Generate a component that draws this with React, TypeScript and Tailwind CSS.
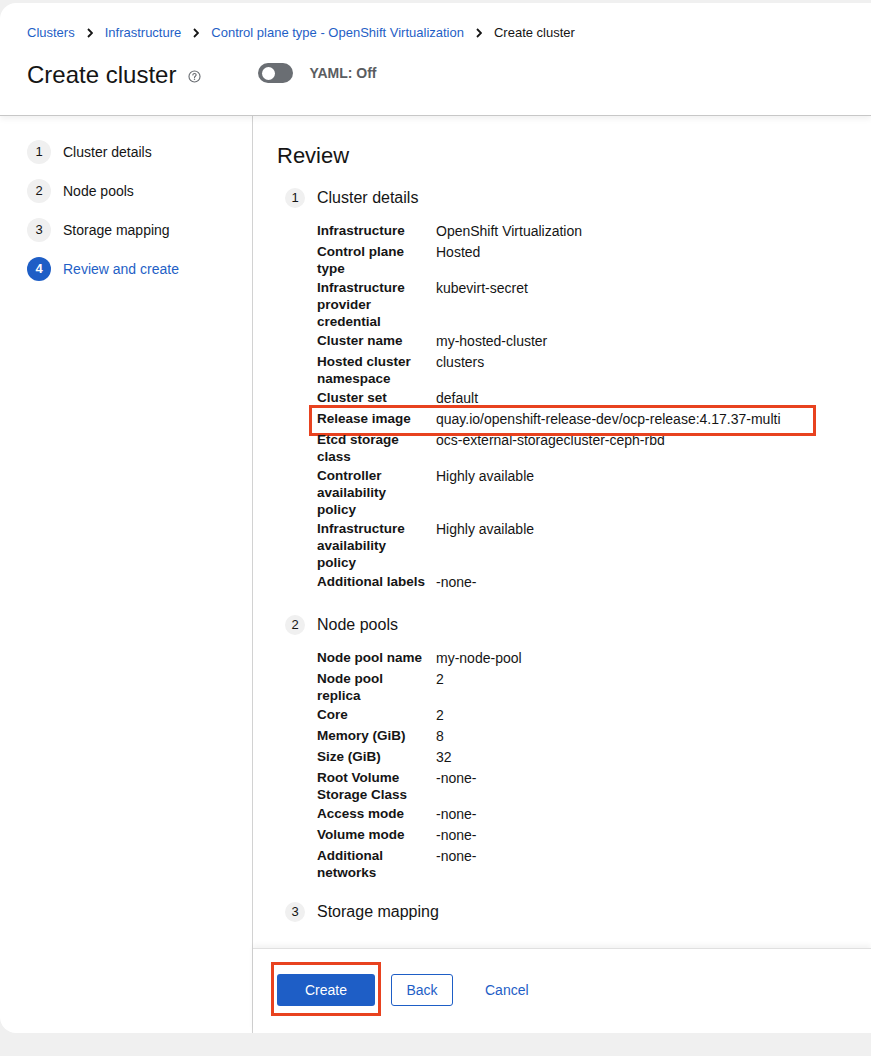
import React from "react";

const font = { fontFamily: '"Liberation Sans", Arial, sans-serif' };

const steps = [
  { n: 1, label: "Cluster details" },
  { n: 2, label: "Node pools" },
  { n: 3, label: "Storage mapping" },
  { n: 4, label: "Review and create", active: true },
];

type Row = { term: string; value: string; highlight?: boolean };

const clusterRows: Row[] = [
  { term: "Infrastructure", value: "OpenShift Virtualization" },
  { term: "Control plane\ntype", value: "Hosted" },
  { term: "Infrastructure\nprovider\ncredential", value: "kubevirt-secret" },
  { term: "Cluster name", value: "my-hosted-cluster" },
  { term: "Hosted cluster\nnamespace", value: "clusters" },
  { term: "Cluster set", value: "default" },
  { term: "Release image", value: "quay.io/openshift-release-dev/ocp-release:4.17.37-multi", highlight: true },
  { term: "Etcd storage\nclass", value: "ocs-external-storagecluster-ceph-rbd" },
  { term: "Controller\navailability\npolicy", value: "Highly available" },
  { term: "Infrastructure\navailability\npolicy", value: "Highly available" },
  { term: "Additional labels", value: "-none-" },
];

const nodePoolRows: Row[] = [
  { term: "Node pool name", value: "my-node-pool" },
  { term: "Node pool\nreplica", value: "2" },
  { term: "Core", value: "2" },
  { term: "Memory (GiB)", value: "8" },
  { term: "Size (GiB)", value: "32" },
  { term: "Root Volume\nStorage Class", value: "-none-" },
  { term: "Access mode", value: "-none-" },
  { term: "Volume mode", value: "-none-" },
  { term: "Additional\nnetworks", value: "-none-" },
];

function Chevron() {
  return (
    <svg width="6" height="10" viewBox="0 0 6 10" className="mx-3 shrink-0">
      <path d="M1 1l4 4-4 4" fill="none" stroke="#151515" strokeWidth="1.8" />
    </svg>
  );
}

function HelpIcon() {
  return (
    <svg width="13" height="13" viewBox="0 0 16 16" className="text-[#6a6e73]">
      <circle cx="8" cy="8" r="6.8" fill="none" stroke="currentColor" strokeWidth="1.4" />
      <path
        d="M6 6.2a2 2 0 0 1 4 .1c0 1.3-2 1.6-2 2.9"
        fill="none"
        stroke="currentColor"
        strokeWidth="1.4"
        strokeLinecap="round"
      />
      <circle cx="8" cy="11.4" r="0.9" fill="currentColor" />
    </svg>
  );
}

function SectionHeader({ n, title }: { n: number; title: string }) {
  return (
    <div className="flex items-center h-6">
      <span className="ml-2 flex h-5 w-5 items-center justify-center rounded-full bg-[#f0f0f0] text-[13px] text-[#151515]">
        {n}
      </span>
      <span className="ml-3 text-[16px] text-[#151515]">{title}</span>
    </div>
  );
}

function Rows({ rows }: { rows: Row[] }) {
  return (
    <dl className="ml-10 mt-3 grid grid-cols-[119px_1fr] gap-y-[2px] text-[#151515]">
      {rows.map((r) => (
        <React.Fragment key={r.term}>
          <dt className="relative whitespace-pre-line text-[13.5px] font-bold leading-[17px]">
            {r.highlight && (
              <span className="pointer-events-none absolute -left-2 -top-[5px] h-[31px] w-[507px] border-[3px] border-[#e8421f]" />
            )}
            {r.term}
          </dt>
          <dd className="text-[14px] leading-[19px]">{r.value}</dd>
        </React.Fragment>
      ))}
    </dl>
  );
}

export default function App() {
  return (
    <div className="min-h-screen bg-[#f0f0f0] pt-[3px]" style={font}>
      <div className="flex h-[1030px] flex-col overflow-hidden rounded-l-[16px] bg-white">
        <header className="relative z-10 h-[113px] shrink-0 border-b border-[#c7c7c7] px-[27px] pt-[21px] shadow-[0_3px_6px_rgba(0,0,0,0.06)]">
          <nav className="flex items-center text-[13px] leading-[18px]">
            <span className="text-[#1f5fc6]">Clusters</span>
            <Chevron />
            <span className="text-[#1f5fc6]">Infrastructure</span>
            <Chevron />
            <span className="text-[#1f5fc6]">Control plane type - OpenShift Virtualization</span>
            <Chevron />
            <span className="text-[#151515]">Create cluster</span>
          </nav>
          <div className="mt-[15px] flex items-center">
            <h1 className="text-[24px] leading-[36px] text-[#151515]">Create cluster</h1>
            <span className="ml-[12px] mt-[3px] flex">
              <HelpIcon />
            </span>
            <span className="mb-[4px] ml-[57px] flex h-[20px] w-[35px] items-center rounded-full bg-[#6a6e73] px-[4px]">
              <span className="h-[13px] w-[13px] rounded-full bg-white" />
            </span>
            <span className="mb-[3px] ml-4 text-[14px] font-bold text-[#5a5d61]">YAML: Off</span>
          </div>
        </header>

        <div className="flex min-h-0 flex-1">
          <aside className="w-[253px] shrink-0 border-r border-[#d2d2d2] pl-[27px] pt-[24px]">
            <ol className="flex flex-col gap-[15px]">
              {steps.map((s) => (
                <li key={s.n} className="flex items-center gap-3 text-[14px]">
                  <span
                    className={
                      s.active
                        ? "flex h-6 w-6 items-center justify-center rounded-full bg-[#1e5ec6] text-[13px] font-bold text-white"
                        : "flex h-6 w-6 items-center justify-center rounded-full bg-[#f0f0f0] text-[13px] text-[#151515]"
                    }
                  >
                    {s.n}
                  </span>
                  <span className={s.active ? "text-[#1f5fc6]" : "text-[#151515]"}>{s.label}</span>
                </li>
              ))}
            </ol>
          </aside>

          <main className="flex min-w-0 flex-1 flex-col">
            <div className="flex-1 px-6 pt-[26px]">
              <h2 className="text-[22px] leading-[28px] text-[#151515]">Review</h2>
              <div className="mt-4">
                <SectionHeader n={1} title="Cluster details" />
                <Rows rows={clusterRows} />
              </div>
              <div className="mt-[21px]">
                <SectionHeader n={2} title="Node pools" />
                <Rows rows={nodePoolRows} />
              </div>
              <div className="mt-[19px]">
                <SectionHeader n={3} title="Storage mapping" />
              </div>
            </div>

            <footer className="flex h-[85px] shrink-0 items-start gap-4 border-t border-[#e0e0e0] px-6 pt-[25px] shadow-[0_-3px_5px_rgba(0,0,0,0.05)]">
              <span className="relative">
                <span className="pointer-events-none absolute -bottom-[10px] -left-[6px] -right-[6px] -top-[12px] border-[3px] border-[#e8421f]" />
                <button className="h-8 w-[98px] rounded-[3px] bg-[#1e5ec6] text-[14px] text-white">Create</button>
              </span>
              <button className="h-8 w-[62px] rounded-[3px] border border-[#1e5ec6] bg-white text-[14px] text-[#1e5ec6]">
                Back
              </button>
              <button className="h-8 px-4 text-[14px] text-[#1e5ec6]">Cancel</button>
            </footer>
          </main>
        </div>
      </div>
    </div>
  );
}
